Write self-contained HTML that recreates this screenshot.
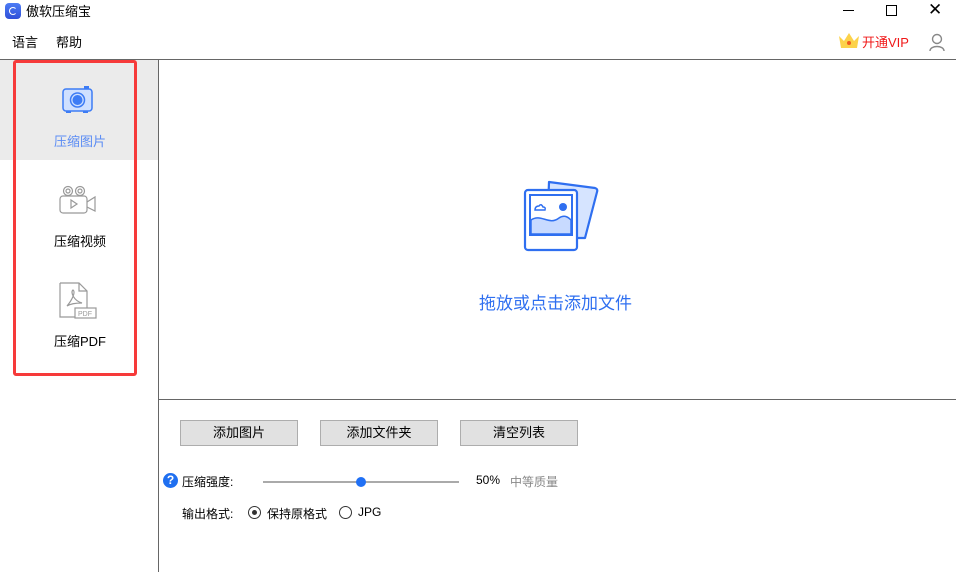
<!DOCTYPE html>
<html><head><meta charset="utf-8"><style>
*{margin:0;padding:0;box-sizing:border-box}
body{width:956px;height:572px;background:#fff;position:relative;overflow:hidden;font-family:"Liberation Sans","Noto Sans CJK SC",sans-serif;font-size:12px;color:#000}
.a{position:absolute}
.btn{position:absolute;top:420px;width:118px;height:26px;background:#e1e1e1;border:1px solid #adadad;text-align:center;line-height:24px;font-size:13px}
</style></head><body>
<div class="a" style="left:5px;top:3px;width:16px;height:16px;border-radius:4px;background:linear-gradient(#4d7cf5,#2f50d8)"><div class="a" style="left:4px;top:4px;width:8px;height:8px;border:1.5px solid #fff;border-radius:50%;border-right-color:transparent"></div></div>
<div class="a" style="left:26px;top:1px;font-size:13px">傲软压缩宝</div>
<div class="a" style="left:843px;top:10px;width:11px;height:1px;background:#000"></div>
<div class="a" style="left:886px;top:5px;width:11px;height:11px;border:1px solid #000"></div>
<div class="a" style="left:928px;top:1px;font-size:17px;line-height:18px">✕</div>
<div class="a" style="left:12px;top:32px;font-size:13px">语言</div>
<div class="a" style="left:56px;top:32px;font-size:13px">帮助</div>
<svg class="a" style="left:837px;top:30px" width="24" height="20"><path d="M2 6 L7 11 L12 3 L17 11 L22 6 L20 18 L4 18Z" fill="#fcd24a"/><circle cx="12" cy="13" r="2" fill="#f05a1e"/></svg>
<div class="a" style="left:862px;top:32px;font-size:13px;color:#f01818">开通VIP</div>
<svg class="a" style="left:928px;top:32px" width="18" height="20" fill="none" stroke="#888" stroke-width="1.4"><circle cx="9" cy="7" r="4.5"/><path d="M2 19 C2 13 16 13 16 19"/></svg>
<div class="a" style="left:0;top:59px;width:956px;height:1px;background:#666"></div>
<div class="a" style="left:158px;top:60px;width:1px;height:512px;background:#666"></div>
<div class="a" style="left:159px;top:399px;width:797px;height:1px;background:#666"></div>
<div class="a" style="left:0;top:60px;width:158px;height:100px;background:#ebebeb"></div>
<div class="a" style="left:13px;top:60px;width:124px;height:316px;border:3px solid #f63a3a;border-radius:3px"></div>
<svg class="a" style="left:61px;top:84px" width="34" height="32"><rect x="2" y="5" width="29" height="22" rx="3" fill="#cfe0ff" stroke="#3d7cf5" stroke-width="1.5"/><rect x="23" y="2" width="5" height="3" fill="#3d7cf5"/><circle cx="16.5" cy="16" r="7" fill="none" stroke="#3d7cf5" stroke-width="1.5"/><circle cx="16.5" cy="16" r="5" fill="#3d7cf5"/><rect x="5" y="27" width="5" height="2" fill="#3d7cf5"/><rect x="22" y="27" width="5" height="2" fill="#3d7cf5"/></svg>
<div class="a" style="left:54px;top:131px;font-size:13px;color:#5b8cf4">压缩图片</div>
<svg class="a" style="left:58px;top:184px" width="40" height="32" fill="none" stroke="#999" stroke-width="1.2"><circle cx="10" cy="7" r="4.5"/><circle cx="10" cy="7" r="2"/><circle cx="22" cy="7" r="4.5"/><circle cx="22" cy="7" r="2"/><rect x="2" y="12" width="27" height="17" rx="3"/><path d="M29 18 L37 13 L37 27 L29 23"/><path d="M13 16 L19 20 L13 24Z"/></svg>
<div class="a" style="left:54px;top:231px;font-size:13px">压缩视频</div>
<svg class="a" style="left:58px;top:282px" width="40" height="38" fill="none" stroke="#999" stroke-width="1.2"><path d="M2 1 H21 L29 9 V26 M2 1 V35 H17"/><path d="M21 1 V9 H29"/><path d="M9 24 C14 18 18 10 15 8 C12 10 16 19 24 21 C18 21 12 22 9 24Z"/><rect x="17" y="26" width="21" height="10" fill="#fff"/><text x="20" y="34" font-size="7" fill="#999" stroke="none" font-family="Liberation Sans">PDF</text></svg>
<div class="a" style="left:54px;top:331px;font-size:13px">压缩PDF</div>
<svg class="a" style="left:523px;top:178px" width="76" height="76"><path d="M26 4 L72 10 Q75 11 74 14 L62 60 L24 60Z" fill="#d6e4ff" stroke="#2f6ff0" stroke-width="2.2" stroke-linejoin="round"/><rect x="2" y="12" width="52" height="60" rx="3" fill="#fff" stroke="#2f6ff0" stroke-width="2.2"/><rect x="7" y="17" width="42" height="40" fill="#fff" stroke="#2f6ff0" stroke-width="2"/><path d="M8 42 C18 35 26 48 36 40 C42 36 46 40 48 42 V56 H8Z" fill="#c8daff" stroke="#2f6ff0" stroke-width="1.5"/><circle cx="40" cy="29" r="4" fill="#2f6ff0"/><path d="M12 32 Q12 28 16 28 Q18 25 20 29 Q23 29 22 32Z" fill="none" stroke="#2f6ff0" stroke-width="1.5"/></svg>
<div class="a" style="left:479px;top:289px;font-size:17px;color:#2f6ff0">拖放或点击添加文件</div>
<div class="btn" style="left:180px">添加图片</div>
<div class="btn" style="left:320px">添加文件夹</div>
<div class="btn" style="left:460px">清空列表</div>
<div class="a" style="left:163px;top:473px;width:15px;height:15px;border-radius:50%;background:#1f6ff0;color:#fff;font-weight:bold;font-size:12px;line-height:15px;text-align:center">?</div>
<div class="a" style="left:182px;top:473px;font-size:12px">压缩强度:</div>
<div class="a" style="left:263px;top:481px;width:196px;height:2px;background:#aaa"></div>
<div class="a" style="left:356px;top:477px;width:10px;height:10px;border-radius:50%;background:#2070f5"></div>
<div class="a" style="left:476px;top:473px;font-size:12px">50%</div>
<div class="a" style="left:510px;top:473px;font-size:12px;color:#888">中等质量</div>
<div class="a" style="left:182px;top:505px;font-size:12px">输出格式:</div>
<div class="a" style="left:248px;top:506px;width:13px;height:13px;border-radius:50%;border:1px solid #333"><div class="a" style="left:3px;top:3px;width:5px;height:5px;border-radius:50%;background:#333"></div></div>
<div class="a" style="left:267px;top:505px;font-size:12px">保持原格式</div>
<div class="a" style="left:339px;top:506px;width:13px;height:13px;border-radius:50%;border:1px solid #333"></div>
<div class="a" style="left:358px;top:505px;font-size:12px">JPG</div>
</body></html>
